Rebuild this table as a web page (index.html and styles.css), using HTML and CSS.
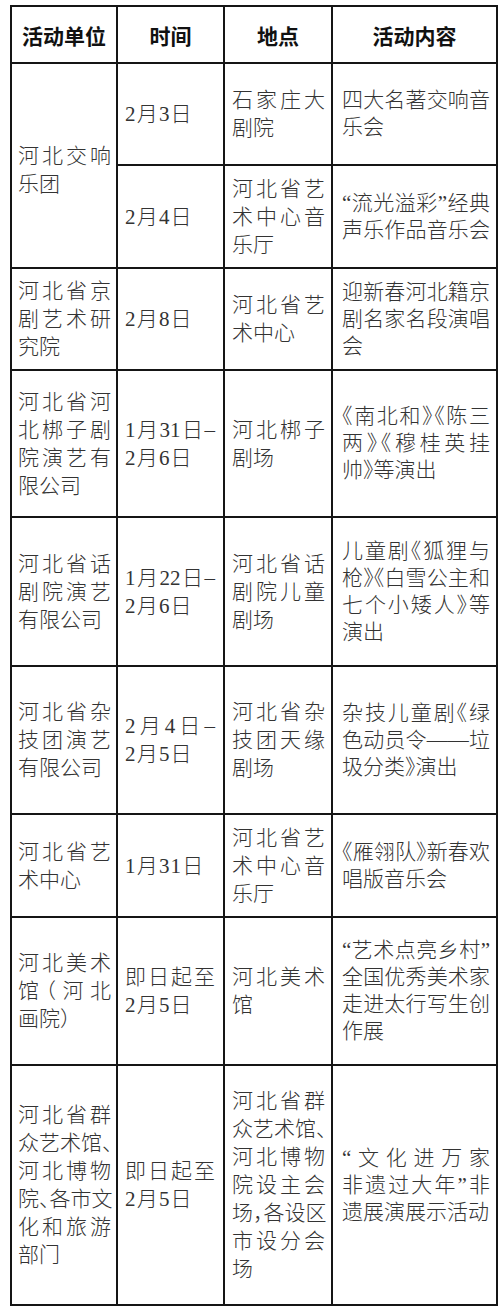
FILE: index.html
```html
<!DOCTYPE html>
<html lang="zh-CN">
<head>
<meta charset="utf-8">
<title>活动安排</title>
<link rel="stylesheet" href="styles.css">
</head>
<body>
<div class="sheet">
  <div class="head c1">活动单位</div>
  <div class="head c2">时间</div>
  <div class="head c3">地点</div>
  <div class="head c4">活动内容</div>

  <div class="cell c1 span2"><span class="j">河北交响</span><span>乐团</span></div>
  <div class="cell c2"><span>2月3日</span></div>
  <div class="cell c3"><span class="j">石家庄大</span><span>剧院</span></div>
  <div class="cell c4"><span class="j">四大名著交响音</span><span>乐会</span></div>

  <div class="cell c2"><span>2月4日</span></div>
  <div class="cell c3"><span class="j">河北省艺</span><span class="j">术中心音</span><span>乐厅</span></div>
  <div class="cell c4"><span class="j">“流光溢彩”经典</span><span class="j">声乐作品音乐会</span></div>

  <div class="cell c1"><span class="j">河北省京</span><span class="j">剧艺术研</span><span>究院</span></div>
  <div class="cell c2"><span>2月8日</span></div>
  <div class="cell c3"><span class="j">河北省艺</span><span>术中心</span></div>
  <div class="cell c4"><span class="j">迎新春河北籍京</span><span class="j">剧名家名段演唱</span><span>会</span></div>

  <div class="cell c1"><span class="j">河北省河</span><span class="j">北梆子剧</span><span class="j">院演艺有</span><span>限公司</span></div>
  <div class="cell c2"><span class="j">1月31日–</span><span>2月6日</span></div>
  <div class="cell c3"><span class="j">河北梆子</span><span>剧场</span></div>
  <div class="cell c4"><span class="j">《南北和》《陈三</span><span class="j">两》《穆桂英挂</span><span>帅》等演出</span></div>

  <div class="cell c1"><span class="j">河北省话</span><span class="j">剧院演艺</span><span>有限公司</span></div>
  <div class="cell c2"><span class="j">1月22日–</span><span>2月6日</span></div>
  <div class="cell c3"><span class="j">河北省话</span><span class="j">剧院儿童</span><span>剧场</span></div>
  <div class="cell c4"><span class="j">儿童剧《狐狸与</span><span class="j">枪》《白雪公主和</span><span class="j">七个小矮人》等</span><span>演出</span></div>

  <div class="cell c1"><span class="j">河北省杂</span><span class="j">技团演艺</span><span>有限公司</span></div>
  <div class="cell c2"><span class="j">2月4日–</span><span>2月5日</span></div>
  <div class="cell c3"><span class="j">河北省杂</span><span class="j">技团天缘</span><span>剧场</span></div>
  <div class="cell c4"><span class="j">杂技儿童剧《绿</span><span class="j">色动员令——垃</span><span>圾分类》演出</span></div>

  <div class="cell c1"><span class="j">河北省艺</span><span>术中心</span></div>
  <div class="cell c2"><span>1月31日</span></div>
  <div class="cell c3"><span class="j">河北省艺</span><span class="j">术中心音</span><span>乐厅</span></div>
  <div class="cell c4"><span class="j">《雁翎队》新春欢</span><span>唱版音乐会</span></div>

  <div class="cell c1"><span class="j">河北美术</span><span class="j">馆（河北</span><span>画院）</span></div>
  <div class="cell c2"><span class="j">即日起至</span><span>2月5日</span></div>
  <div class="cell c3"><span class="j">河北美术</span><span>馆</span></div>
  <div class="cell c4"><span class="j">“艺术点亮乡村”</span><span class="j">全国优秀美术家</span><span class="j">走进太行写生创</span><span>作展</span></div>

  <div class="cell c1"><span class="j">河北省群</span><span class="j">众艺术馆、</span><span class="j">河北博物</span><span class="j">院、各市文</span><span class="j">化和旅游</span><span>部门</span></div>
  <div class="cell c2"><span class="j">即日起至</span><span>2月5日</span></div>
  <div class="cell c3"><span class="j">河北省群</span><span class="j">众艺术馆、</span><span class="j">河北博物</span><span class="j">院设主会</span><span class="j">场，各设区</span><span class="j">市设分会</span><span>场</span></div>
  <div class="cell c4"><span class="j">“文化进万家</span><span class="j">非遗过大年”非</span><span>遗展演展示活动</span></div>
</div>
</body>
</html>
```

FILE: styles.css
```css
html, body {
  margin: 0;
  padding: 0;
  background: #ffffff;
}

body {
  font-family: "Liberation Serif", "Noto Sans CJK SC", sans-serif;
  font-size: 21px;
  color: #333333;
}

.sheet {
  margin: 5px 0 0 10px;
  width: 488px;
  box-sizing: border-box;
  display: grid;
  grid-template-columns: 104px 105px 106px 163px;
  grid-template-rows: 55px 100px 101px 100px 145px 147px 146px 101px 146px 238px;
  gap: 2px;
  padding: 2px;
  background: #151515;
}

.head,
.cell {
  background: #ffffff;
  box-sizing: border-box;
  display: flex;
  flex-direction: column;
  justify-content: center;
  overflow: visible;
}

.head {
  align-items: center;
  font-family: "Noto Sans CJK SC", sans-serif;
  font-weight: 700;
  color: #111111;
  font-size: 21px;
  line-height: 28px;
  padding-top: 1px;
}

.cell {
  line-height: 28px;
  font-weight: 300;
  font-feature-settings: "halt";
  text-spacing-trim: space-all;
  white-space: nowrap;
}

.cell > span {
  display: block;
  text-align: left;
}

.cell > span.j {
  text-align: justify;
  text-align-last: justify;
  text-justify: inter-character;
}

.c1.cell { padding: 0 5px 0 6px; }
.c2.cell { padding: 0 8px 0 7px; }
.c2.cell > span:not(.j) { letter-spacing: 1.2px; }
.c3.cell { padding: 0 6px 0 7px; }
.c4.cell { padding: 0 6px 0 9px; line-height: 27px; }

.span2 {
  grid-row: span 2;
  padding-top: 8px !important;
}
```
